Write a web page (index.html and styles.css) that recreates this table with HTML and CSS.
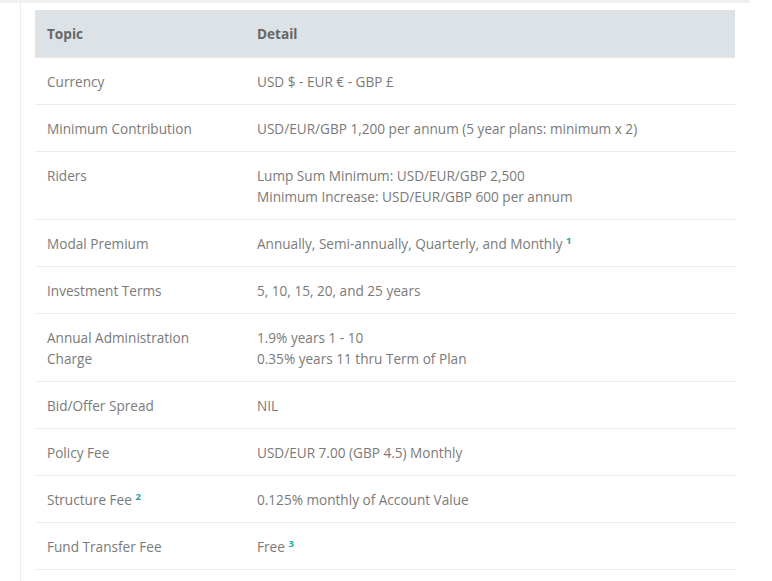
FILE: index.html
```html
<!DOCTYPE html>
<html>
<head>
<meta charset="utf-8">
<link rel="stylesheet" href="styles.css">
</head>
<body>
<div class="topstrip"></div>
<div class="card">
  <table class="spec">
    <thead>
      <tr><th class="c1">Topic</th><th>Detail</th></tr>
    </thead>
    <tbody>
      <tr><td class="c1">Currency</td><td>USD $ - EUR € - GBP £</td></tr>
      <tr><td class="c1">Minimum Contribution</td><td>USD/EUR/GBP 1,200 per annum (5 year plans: minimum x 2)</td></tr>
      <tr><td class="c1">Riders</td><td>Lump Sum Minimum: USD/EUR/GBP 2,500<br>Minimum Increase: USD/EUR/GBP 600 per annum</td></tr>
      <tr><td class="c1">Modal Premium</td><td>Annually, Semi-annually, Quarterly, and Monthly <sup class="note">1</sup></td></tr>
      <tr><td class="c1">Investment Terms</td><td>5, 10, 15, 20, and 25 years</td></tr>
      <tr><td class="c1">Annual Administration Charge</td><td>1.9% years 1 - 10<br>0.35% years 11 thru Term of Plan</td></tr>
      <tr><td class="c1">Bid/Offer Spread</td><td>NIL</td></tr>
      <tr><td class="c1">Policy Fee</td><td>USD/EUR 7.00 (GBP 4.5) Monthly</td></tr>
      <tr><td class="c1">Structure Fee <sup class="note">2</sup></td><td>0.125% monthly of Account Value</td></tr>
      <tr><td class="c1">Fund Transfer Fee</td><td>Free <sup class="note">3</sup></td></tr>
    </tbody>
  </table>
</div>
</body>
</html>
```
FILE: styles.css
```css
html, body {
  margin: 0;
  padding: 0;
  background: #ffffff;
}
body {
  font-family: "Open Sans", "Noto Sans", sans-serif;
  font-size: 13.6px;
  color: #7a7a7a;
}
.topstrip {
  width: 750px;
  height: 3px;
  background: #f1f1f1;
}
.card {
  margin-left: 20px;
  width: 728px;
  border-left: 1px solid #eeeeee;
  border-right: 1px solid #eeeeee;
  padding: 7px 14px 20px 14px;
  background: #ffffff;
}
.spec {
  width: 700px;
  border-collapse: collapse;
}
.spec th, .spec td {
  text-align: left;
  vertical-align: top;
  padding: 13px 12px 12px 12px;
  line-height: 21px;
  border-bottom: 1px solid #ececec;
}
.spec th {
  background: #dde2e6;
  color: #666666;
  font-weight: 700;
  padding-bottom: 13px;
  border-bottom: 1px solid #e6e9ec;
}
.spec .c1 {
  width: 186px;
}
.note {
  color: #1aa6a6;
  font-weight: 700;
  font-size: 9.5px;
  line-height: 0;
  vertical-align: 5px;
}
```
